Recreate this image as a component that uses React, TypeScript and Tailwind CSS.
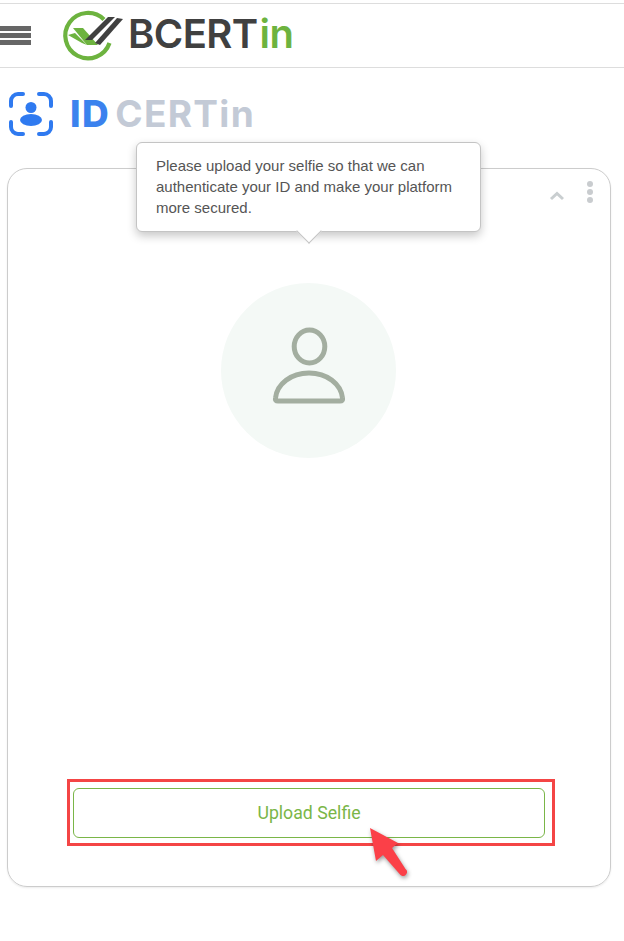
export default function App() {
  return (
    <div className="relative w-[624px] h-[941px] bg-white overflow-hidden" style={{ fontFamily: '"Liberation Sans", Arial, sans-serif' }}>
      <header className="mt-[3px] h-[65px] border-y border-[#dddddd] flex items-center">
        <div className="flex flex-col gap-[2px] w-[31px] mt-[-1px]">
          <div className="h-[5px] bg-[#666666]" />
          <div className="h-[5px] bg-[#666666]" />
          <div className="h-[5px] bg-[#666666]" />
        </div>
        <svg className="ml-[24px] mt-[-2px] shrink-0" width="75" height="60" viewBox="0 0 75 60" fill="none">
          <path d="M49 14.5A22.7 22.7 0 1 0 54.5 38" stroke="#6db33f" strokeWidth="4.2" />
          <path d="M18 23L28 23L43 40L32 40Z" fill="#6db33f" />
          <path d="M13 30L20 28L32 40L27 38Z" fill="#6db33f" />
          <path d="M30 35L53 12L60 12L37 35Z" fill="#404040" />
          <path d="M40 38L62 13L68 14L45 40Z" fill="#404040" />
        </svg>
        <div className="ml-[-2px] mt-[-3px] flex text-[40px] leading-[48px] font-semibold tracking-[-0.6px]" style={{ fontFamily: 'Inter, sans-serif' }}>
          <span className="text-[#404040]">BCERT</span>
          <span className="text-[#6db33f] ml-[2px]">in</span>
        </div>
      </header>

      <div className="ml-[9px] mt-[24px] h-[44px] flex items-center" style={{ fontFamily: 'Inter, sans-serif' }}>
        <svg width="44" height="44" viewBox="0 0 44 44" fill="none" className="shrink-0">
          <g stroke="#2f7af0" strokeWidth="4" strokeLinecap="round">
            <path d="M2 14V9A7 7 0 0 1 9 2H14" />
            <path d="M30 2H35A7 7 0 0 1 42 9V14" />
            <path d="M2 30V35A7 7 0 0 0 9 42H14" />
            <path d="M30 42H35A7 7 0 0 0 42 35V30" />
          </g>
          <circle cx="22" cy="15.5" r="5.5" fill="#2f7af0" />
          <ellipse cx="22" cy="28" rx="11" ry="6" fill="#2f7af0" />
        </svg>
        <span className="ml-[17px] text-[37px] leading-[44px] font-extrabold tracking-[1.5px] text-[#3b82ee]">ID</span>
        <span className="ml-[5px] text-[37px] leading-[44px] font-bold tracking-[1.3px] text-[#c3cad6]">CERTin</span>
      </div>

      <main className="relative mt-[32px] ml-[7px] w-[604px] h-[719px] rounded-[20px] border border-[#cccccc] shadow-[0_1px_2px_rgba(0,0,0,0.08)] flex flex-col">
        <div className="absolute left-[128px] top-[-27px] w-[345px] h-[90px] rounded-[6px] border border-[#c4c4c4] bg-white shadow-[0_4px_10px_rgba(0,0,0,0.22)] pl-[19px] pt-[12px] text-[15px] leading-[21px] text-[#555555] z-10">
          <p>Please upload your selfie so that we can</p>
          <p>authenticate your ID and make your platform</p>
          <p>more secured.</p>
          <div className="absolute left-[163px] bottom-[-9px] w-[18px] h-[18px] rotate-45 bg-white border-r border-b border-[#c4c4c4]" />
        </div>

        <svg className="absolute left-[541px] top-[21px]" width="16" height="12" viewBox="0 0 16 12" fill="none">
          <path d="M2 9L8 3.5L14 9" stroke="#c9ced0" strokeWidth="3" />
        </svg>
        <div className="absolute left-[579px] top-[12px] flex flex-col gap-[2px]">
          <div className="w-[6px] h-[6px] rounded-full bg-[#c9cccf]" />
          <div className="w-[6px] h-[6px] rounded-full bg-[#c9cccf]" />
          <div className="w-[6px] h-[6px] rounded-full bg-[#c9cccf]" />
        </div>

        <div className="self-start ml-[213px] mt-[114px] w-[175px] h-[175px] rounded-full bg-[#f4f9f6] flex items-center justify-center">
          <svg className="overflow-visible" width="80" height="84" viewBox="0 0 80 84" fill="none" stroke="#a3aea0" strokeWidth="5" strokeLinejoin="round">
            <ellipse cx="40.5" cy="17.5" rx="15.3" ry="16.5" />
            <path d="M6.5 69C8 55 22 44 40 44C58 44 72 55 73.5 69C74 71 73 72 71 72H9C7 72 6 71 6.5 69Z" />
          </svg>
        </div>

        <div className="mt-auto mb-[40px] self-start ml-[59px] w-[488px] h-[67px] border-[3px] border-[#f44545] pl-[3px] pr-[7px] pt-[6px] pb-[5px]">
          <button className="w-full h-full rounded-[6px] border border-[#7ab648] text-[#7ab648] text-[17.7px] pt-[1px]" style={{ fontFamily: 'Roboto, sans-serif' }}>
            Upload Selfie
          </button>
        </div>
      </main>

      <svg className="absolute left-[360px] top-[820px] drop-shadow-[1px_2px_2px_rgba(0,0,0,0.4)]" width="60" height="66" viewBox="0 0 60 66" fill="none">
        <path d="M10 8L38 23L32 28L45.5 49A3 3 0 0 1 40.5 55L23 35L16 41Z" fill="#fb4048" />
      </svg>
    </div>
  );
}
